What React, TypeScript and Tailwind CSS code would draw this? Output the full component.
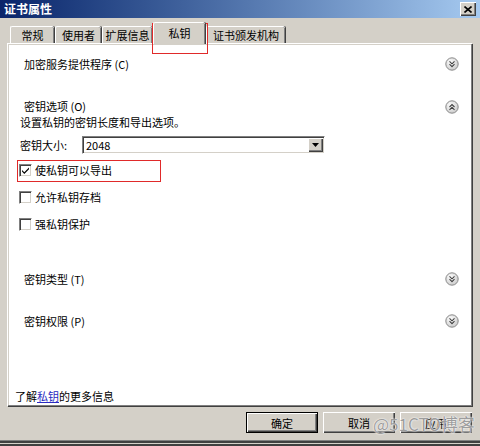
import React from 'react';

const font = { fontFamily: '"Noto Sans CJK SC", "Liberation Sans", sans-serif' };

function RoundToggle({ up }: { up?: boolean }) {
  return (
    <svg width="14" height="14" viewBox="0 0 14 14">
      <defs>
        <radialGradient id={up ? 'gu' : 'gd'} cx="40%" cy="35%" r="70%">
          <stop offset="0%" stopColor="#ffffff" />
          <stop offset="100%" stopColor="#c8c8c8" />
        </radialGradient>
      </defs>
      <circle cx="7" cy="7" r="6.2" fill={`url(#${up ? 'gu' : 'gd'})`} stroke="#8a8a8a" strokeWidth="1" />
      {up ? (
        <path d="M4.5 7 L7 4.5 L9.5 7 M4.5 9.8 L7 7.3 L9.5 9.8" fill="none" stroke="#404040" strokeWidth="1.1" />
      ) : (
        <path d="M4.5 4.3 L7 6.8 L9.5 4.3 M4.5 7.2 L7 9.7 L9.5 7.2" fill="none" stroke="#404040" strokeWidth="1.1" />
      )}
    </svg>
  );
}

function Tab({ label, w, selected, ml }: { label: string; w: string; selected?: boolean; ml: string }) {
  if (selected) {
    return (
      <div
        className={`relative z-10 -mb-[1px] flex h-[22px] ${w} ${ml} items-start justify-center rounded-t-[2px] border-l border-t border-white bg-[#d4d0c8] pt-[2px] shadow-[inset_-1px_0_0_#808080,1px_0_0_#404040]`}
      >
        <span className="text-[11px] leading-[16px] text-black">{label}</span>
      </div>
    );
  }
  return (
    <div
      className={`flex h-[17px] ${w} ${ml} items-center justify-center rounded-t-[2px] border-l border-t border-white bg-[#d4d0c8] shadow-[inset_-1px_0_0_#808080,1px_0_0_#404040]`}
    >
      <span className="text-[11px] leading-[16px] text-black">{label}</span>
    </div>
  );
}

function Checkbox({ checked, label, mt }: { checked?: boolean; label: string; mt: string }) {
  return (
    <div className={`flex h-4 items-center pl-[10px] ${mt}`}>
      <div className="flex h-[13px] w-[13px] items-center justify-center border-l border-t border-b border-r border-l-[#808080] border-t-[#808080] border-b-white border-r-white shadow-[inset_1px_1px_0_#404040,inset_-1px_-1px_0_#d4d0c8] bg-white">
        {checked && (
          <svg width="9" height="9" viewBox="0 0 9 9">
            <path d="M1 4 L3.3 6.3 L8 1.6 L8 3.2 L3.3 7.9 L1 5.6 Z" fill="#000" />
          </svg>
        )}
      </div>
      <span className="ml-[3px] text-[11px] leading-[16px] text-black">{label}</span>
    </div>
  );
}

function Section({ label, up, mt }: { label: string; up?: boolean; mt: string }) {
  return (
    <div className={`flex h-4 items-center justify-between pl-[15px] pr-[12px] ${mt}`}>
      <span className="text-[11px] leading-[16px] text-black">{label}</span>
      <RoundToggle up={up} />
    </div>
  );
}

function Button({ label, isDefault }: { label: string; isDefault?: boolean }) {
  return (
    <div
      className={`flex h-[21px] w-[72px] items-center justify-center bg-[#d4d0c8] ${
        isDefault
          ? 'border border-black shadow-[inset_1px_1px_0_#fff,inset_-1px_-1px_0_#404040,inset_-2px_-2px_0_#808080]'
          : 'shadow-[inset_1px_1px_0_#fff,inset_-1px_-1px_0_#404040,inset_-2px_-2px_0_#808080]'
      }`}
    >
      <span className="text-[11px] leading-[16px] text-black">{label}</span>
    </div>
  );
}

export default function App() {
  return (
    <div className="relative flex h-[446px] w-[480px] flex-col overflow-hidden bg-[#d4d0c8]" style={font}>
      {/* title bar */}
      <div className="flex h-[18px] shrink-0 items-center justify-between bg-linear-to-r from-[#0a246a] to-[#a6caf0] pl-[4px] pr-[4px]">
        <span className="text-[12px] font-bold leading-[16px] text-white">证书属性</span>
        <div className="flex h-[14px] w-[16px] items-center justify-center bg-[#d4d0c8] shadow-[inset_1px_1px_0_#fff,inset_-1px_-1px_0_#404040,inset_-2px_-2px_0_#808080]">
          <svg width="8" height="7" viewBox="0 0 8 7">
            <path d="M0.5 0.5 L7.5 6.5 M7.5 0.5 L0.5 6.5" stroke="#000" strokeWidth="1.6" />
          </svg>
        </div>
      </div>

      {/* tabs */}
      <div className="flex h-[25px] shrink-0 items-end pl-[10px]">
        <Tab label="常规" w="w-[44px]" ml="ml-0" />
        <Tab label="使用者" w="w-[46px]" ml="ml-[1px]" />
        <Tab label="扩展信息" w="w-[50px]" ml="ml-[1px]" />
        <Tab label="私钥" w="w-[52px]" ml="ml-[1px]" selected />
        <Tab label="证书颁发机构" w="w-[79px]" ml="ml-[1px]" />
      </div>

      {/* page */}
      <div className="ml-[7px] flex h-[363px] w-[465px] shrink-0 border-l border-t border-white p-[1px] shadow-[inset_-1px_-1px_0_#808080,1px_1px_0_#404040]">
        <div className="flex flex-1 flex-col bg-white pb-[1px]">
          <Section label="加密服务提供程序 (C)" mt="mt-[11px]" />
          <div className="mt-[27px] flex h-[15px] items-center justify-between pl-[15px] pr-[12px]">
            <span className="text-[11px] leading-[15px] text-black">密钥选项 (O)</span>
            <RoundToggle up />
          </div>
          <div className="flex h-4 items-center pl-[11px]">
            <span className="text-[11px] leading-[16px] text-black">设置私钥的密钥长度和导出选项。</span>
          </div>
          <div className="mt-[6px] flex h-[18px] items-center pl-[11px]">
            <span className="w-[62px] text-[11px] leading-[16px] text-black">密钥大小:</span>
            <div className="flex h-[18px] w-[243px] items-center justify-between border-l border-t border-b border-r border-l-[#808080] border-t-[#808080] border-b-white border-r-white bg-white shadow-[inset_1px_1px_0_#404040,inset_-1px_-1px_0_#d4d0c8]">
              <span className="pl-[3px] text-[11px] leading-[14px] text-black">2048</span>
              <div className="mr-[1px] flex h-[14px] w-[15px] items-center justify-center bg-[#d4d0c8] shadow-[inset_1px_1px_0_#fff,inset_-1px_-1px_0_#404040,inset_-2px_-2px_0_#808080]">
                <svg width="7" height="4" viewBox="0 0 7 4">
                  <path d="M0 0 L7 0 L3.5 4 Z" fill="#000" />
                </svg>
              </div>
            </div>
          </div>
          <Checkbox checked label="使私钥可以导出" mt="mt-[8px]" />
          <Checkbox label="允许私钥存档" mt="mt-[11px]" />
          <Checkbox label="强私钥保护" mt="mt-[11px]" />
          <Section label="密钥类型 (T)" mt="mt-[39px]" />
          <Section label="密钥权限 (P)" mt="mt-[26px]" />
          <div className="mt-auto flex h-4 items-center pl-[6px]">
            <span className="text-[11px] leading-[16px] text-black">
              了解<span className="text-[#2a2ac0] underline">私钥</span>的更多信息
            </span>
          </div>
        </div>
      </div>

      {/* buttons */}
      <div className="mt-[6px] flex shrink-0 justify-end gap-[5px] pr-[8px]">
        <Button label="确定" isDefault />
        <Button label="取消" />
        <Button label="应用" />
      </div>

      {/* bottom edge */}
      <div className="mt-auto flex shrink-0 flex-col">
        <div className="h-[1px] bg-[#808080]" />
        <div className="h-[2px] bg-[#404040]" />
        <div className="h-[1px] bg-[#d4d0c8]" />
        <div className="h-[2px] bg-[#404040]" />
      </div>

      {/* annotations */}
      <div className="pointer-events-none absolute left-[152px] top-[23px] h-[31px] w-[56px] border border-[#e02a2a]" />
      <div className="pointer-events-none absolute left-[17px] top-[160px] h-[22px] w-[144px] border border-[#e02a2a]" />
      <div className="pointer-events-none absolute left-[373px] top-[412px] whitespace-nowrap text-[17px] leading-[24px] text-[#8c8c8c]/85 [text-shadow:0_0_2px_#fff,0_0_1px_#fff]">
        @51CTO博客
      </div>
    </div>
  );
}
